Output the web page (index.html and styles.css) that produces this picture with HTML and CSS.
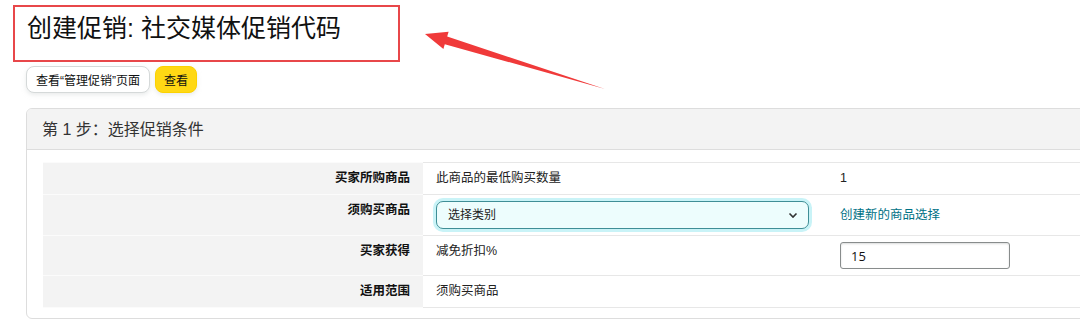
FILE: index.html
```html
<!DOCTYPE html>
<html lang="zh-CN">

<head>
    <meta charset="UTF-8">
    <meta name="viewport" content="width=device-width, initial-scale=1.0">
    <title>创建促销: 社交媒体促销代码</title>
    <link rel="stylesheet" href="styles.css">
</head>

<body>
    <div class="page">
        <!-- title with the red annotation box -->
        <h1 class="title">创建促销: 社交媒体促销代码</h1>
        <svg class="arrow" width="200" height="70" viewBox="420 26 200 70">
            <polygon points="425,34 448.6,31.8 447.2,36.6 605,89 444.8,44.2 443.4,49" fill="#f03a3a" />
        </svg>

        <div class="actions">
            <button class="btn">查看“管理促销”页面</button>
            <button class="btn btn-yellow">查看</button>
        </div>

        <div class="panel">
            <div class="panel-head">第 1 步：选择促销条件</div>
            <div class="panel-body">
                <table class="cond">
                    <tr>
                        <th>买家所购商品</th>
                        <td class="col-b">此商品的最低购买数量</td>
                        <td class="col-c">1</td>
                    </tr>
                    <tr>
                        <th>须购买商品</th>
                        <td class="col-b">
                            <div class="select">
                                <span>选择类别</span>
                                <svg width="10" height="7" viewBox="0 0 10 7">
                                    <path d="M1.5 1.5 L5 5 L8.5 1.5" fill="none" stroke="#333" stroke-width="1.6" />
                                </svg>
                            </div>
                        </td>
                        <td class="col-c"><a class="link" href="#">创建新的商品选择</a></td>
                    </tr>
                    <tr>
                        <th>买家获得</th>
                        <td class="col-b">减免折扣%</td>
                        <td class="col-c"><input class="num" type="text" value="15"></td>
                    </tr>
                    <tr>
                        <th>适用范围</th>
                        <td class="col-b">须购买商品</td>
                        <td class="col-c"></td>
                    </tr>
                </table>
            </div>
        </div>
    </div>
</body>

</html>
```

FILE: styles.css
```css
* {
    box-sizing: border-box;
}

body {
    margin: 0;
    padding: 0;
    background-color: #fff;
    color: #0f1111;
    font-family: "Liberation Sans", "Noto Sans CJK SC", sans-serif;
    overflow: hidden;
}

.page {
    position: relative;
    width: 1200px;
    padding: 5px 0 0 0;
}

/* Title */
.title {
    display: block;
    width: 387px;
    margin: 0 0 0 13px;
    padding: 4px 0 15px 12px;
    border: 2.5px solid #e8474a;
    font-size: 25px;
    line-height: 34px;
    font-weight: normal;
    color: #111;
}

.arrow {
    position: absolute;
    left: 420px;
    top: 26px;
}

/* Buttons */
.actions {
    display: flex;
    gap: 5px;
    margin: 4px 0 0 26px;
}

.btn {
    height: 27px;
    padding: 0 9px;
    font-family: inherit;
    font-size: 12px;
    color: #0f1111;
    background-color: #fff;
    border: 1px solid #d5d9d9;
    border-radius: 8px;
    box-shadow: 0 2px 4px rgba(213, 217, 217, 0.5);
}

.btn-yellow {
    padding: 0 8px;
    background-color: #ffd814;
    border-color: #fcd200;
}

/* Panel */
.panel {
    margin: 15px 0 0 26px;
    width: 1120px;
    border: 1px solid #dddddd;
    border-radius: 6px 0 0 6px;
    overflow: hidden;
}

.panel-head {
    height: 41px;
    padding-left: 15px;
    background-color: #f3f3f3;
    border-bottom: 1px solid #dddddd;
    font-size: 16px;
    line-height: 41px;
    color: #333;
}

.panel-body {
    padding: 12px 0 10px 16px;
}

.cond {
    width: 100%;
    border-collapse: collapse;
    font-size: 12.5px;
    line-height: 19px;
}

.cond th,
.cond td {
    padding: 6px 12px;
    vertical-align: top;
    border-top: 1px solid #e7e7e7;
    border-bottom: 1px solid #e7e7e7;
}

.cond th {
    width: 380px;
    padding-right: 13px;
    text-align: right;
    font-weight: bold;
    font-size: 12.5px;
    color: #111;
    background-color: #f3f3f3;
    border-color: #fbfbfb;
}

.cond .col-b {
    width: 405px;
    padding-left: 13px;
    color: #222;
}

.cond .col-c {
    color: #222;
}

.select {
    display: flex;
    align-items: center;
    justify-content: space-between;
    width: 373px;
    height: 28px;
    padding: 0 10px 0 11px;
    background-color: #edfdfd;
    border: 1px solid #3f8e96;
    border-radius: 7px;
    box-shadow: 0 0 0 3px #c9f3f7;
    font-size: 12px;
}

.link {
    display: block;
    line-height: 28px;
    color: #007185;
    text-decoration: none;
}

.num {
    display: block;
    width: 170px;
    height: 27px;
    padding: 0 10px;
    font-family: "Open Sans", "Noto Sans CJK SC", sans-serif;
    font-size: 13px;
    color: #111;
    border: 1px solid #888c8c;
    border-radius: 3px;
    box-shadow: 0 1px 2px rgba(15, 17, 17, 0.15) inset;
}
```
